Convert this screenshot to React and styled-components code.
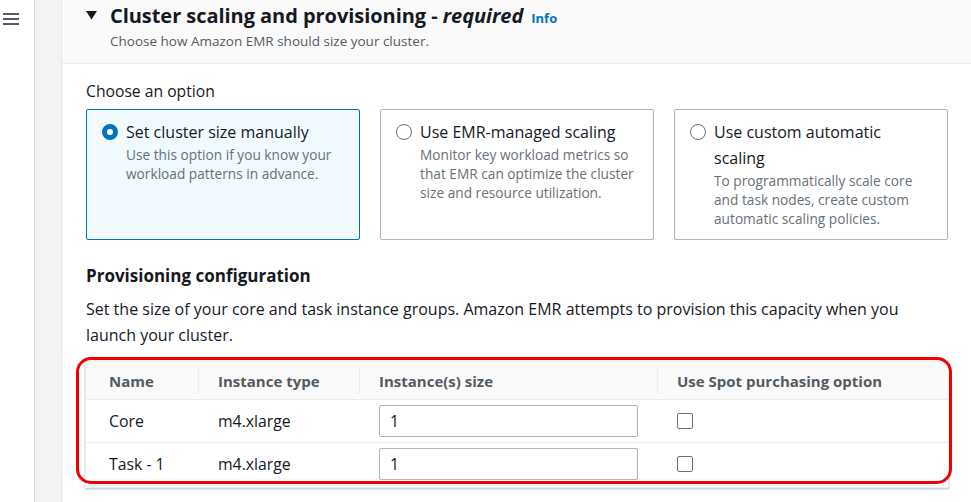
import styled, { createGlobalStyle } from 'styled-components'

const GlobalStyle = createGlobalStyle`
	html, body {
		margin: 0;
		padding: 0;
		background: #ffffff;
		font-family: 'Open Sans', 'Noto Sans', sans-serif;
		color: #16191f;
		overflow: hidden;
	}
`

const Page = styled.div`
	display: flex;
	width: 971px;
	height: 502px;
	overflow: hidden;
`

const NavRail = styled.div`
	width: 34px;
	flex-shrink: 0;
	padding-top: 12px;
	display: flex;
	justify-content: flex-start;
	padding-left: 3px;
	box-sizing: border-box;
`

const Gutter = styled.div`
	width: 28px;
	flex-shrink: 0;
	background: #f2f3f3;
	border-left: 1px solid #d5dbdb;
	border-right: 1px solid #e4e8e8;
	box-sizing: border-box;
`

const Panel = styled.section`
	flex: 1;
	min-width: 0;
	background: #ffffff;
`

const PanelHeader = styled.header`
	height: 64px;
	box-sizing: border-box;
	background: #fafafa;
	border-bottom: 1px solid #eaeded;
	padding: 3px 24px 0 24px;
	display: flex;
	gap: 13px;
`

const Caret = styled.span`
	display: flex;
	align-items: flex-start;
	width: 11px;
	padding-top: 8px;
`

const HeaderText = styled.div`
	display: flex;
	flex-direction: column;
`

const Title = styled.h2`
	margin: 0;
	font-size: 20px;
	line-height: 26px;
	font-weight: 700;
	letter-spacing: -0.05px;
	color: #16191f;

	em {
		font-style: italic;
	}
`

const InfoLink = styled.a`
	font-size: 13px;
	font-weight: 700;
	color: #0073bb;
	margin-left: 8px;
	letter-spacing: 0;
	text-decoration: none;
`

const Subtitle = styled.p`
	margin: 0;
	font-size: 13.5px;
	line-height: 20px;
	color: #545b64;
`

const Body = styled.div`
	padding: 16px 24px 0 24px;
	display: flex;
	flex-direction: column;
`

const FieldLabel = styled.div`
	font-size: 15.7px;
	line-height: 22px;
	color: #16191f;
	margin-bottom: 7px;
`

const Cards = styled.div`
	display: grid;
	grid-template-columns: repeat(3, 1fr);
	gap: 20px;
	width: 862px;
`

const Card = styled.label`
	box-sizing: border-box;
	height: 131px;
	padding: 9px 15px;
	display: flex;
	gap: 8px;
	border: 1px solid ${(p) => (p.$selected ? '#0073bb' : '#aab7b8')};
	background: ${(p) => (p.$selected ? '#f1faff' : '#ffffff')};
	border-radius: 2px;
`

const Radio = styled.span`
	flex-shrink: 0;
	width: 16px;
	height: 16px;
	margin-top: 5px;
	border-radius: 50%;
	box-sizing: border-box;
	border: ${(p) => (p.$checked ? '5px solid #0073bb' : '1.5px solid #687078')};
	background: #ffffff;
`

const CardText = styled.div`
	display: flex;
	flex-direction: column;
`

const CardTitle = styled.span`
	font-size: 16px;
	line-height: 26px;
	color: #16191f;
`

const CardDesc = styled.span`
	font-size: 13.7px;
	line-height: 19px;
	color: #687078;
`

const SectionTitle = styled.h3`
	margin: 24px 0 0 0;
	font-size: 17px;
	line-height: 24px;
	font-weight: 700;
	color: #16191f;
`

const Paragraph = styled.p`
	margin: 8px 0 0 0;
	font-size: 16px;
	line-height: 26px;
	color: #16191f;
`

const TableWrap = styled.div`
	position: relative;
	margin: 13px 0 0 -1px;
	width: 864px;
`

const Table = styled.div`
	height: 125px;
	overflow: hidden;
	border: 1px solid #eaeded;
	box-shadow: 0 1px 2px rgba(0, 28, 36, 0.3);
	background: #ffffff;
`

const Row = styled.div`
	display: grid;
	grid-template-columns: 112px 161px 298px 1fr;
	align-items: center;
	height: ${(p) => (p.$head ? '38px' : '43px')};
	background: ${(p) => (p.$head ? '#fafafa' : '#ffffff')};
	border-bottom: 1px solid #eaeded;
	box-sizing: border-box;
`

const HeadCell = styled.div`
	position: relative;
	padding-left: ${(p) => (p.$first ? '23px' : '20px')};
	font-size: 15px;
	font-weight: 700;
	color: #545b64;

	&::before {
		content: '';
		display: ${(p) => (p.$first ? 'none' : 'block')};
		position: absolute;
		left: 0;
		top: -3px;
		bottom: -3px;
		width: 1px;
		background: #eaeded;
	}
`

const Cell = styled.div`
	padding-left: ${(p) => (p.$first ? '23px' : '20px')};
	font-size: 15.8px;
	color: #16191f;
`

const SizeInput = styled.input`
	width: 259px;
	height: 32px;
	box-sizing: border-box;
	border: 1px solid #aab7b8;
	border-radius: 2px;
	padding: 0 10px;
	font-family: 'Open Sans', 'Noto Sans', sans-serif;
	font-size: 15.8px;
	color: #16191f;
	outline: none;
`

const CheckBox = styled.span`
	display: block;
	width: 16px;
	height: 16px;
	box-sizing: border-box;
	border: 1px solid #687078;
	border-radius: 2px;
	background: #ffffff;
`

const Highlight = styled.div`
	position: absolute;
	left: -9px;
	right: -3px;
	top: -4px;
	bottom: 4px;
	border: 3.5px solid #f00000;
	border-radius: 15px;
	pointer-events: none;
`

const options = [
	{
		title: 'Set cluster size manually',
		desc: 'Use this option if you know your workload patterns in advance.',
		selected: true,
	},
	{
		title: 'Use EMR-managed scaling',
		desc: 'Monitor key workload metrics so that EMR can optimize the cluster size and resource utilization.',
	},
	{
		title: 'Use custom automatic scaling',
		desc: 'To programmatically scale core and task nodes, create custom automatic scaling policies.',
	},
]

const rows = [
	{ name: 'Core', type: 'm4.xlarge', size: '1' },
	{ name: 'Task - 1', type: 'm4.xlarge', size: '1' },
]

const MenuIcon = () => (
	<svg width='16' height='14' viewBox='0 0 16 14'>
		<path d='M0 2h16M0 7h16M0 12h16' stroke='#545b64' strokeWidth='2' />
	</svg>
)

const CaretIcon = () => (
	<svg width='11' height='9' viewBox='0 0 11 9'>
		<path d='M0 0h11L5.5 8.5z' fill='#16191f' />
	</svg>
)

export default function App() {
	return (
		<>
			<GlobalStyle />
			<Page>
				<NavRail>
					<MenuIcon />
				</NavRail>
				<Gutter />
				<Panel>
					<PanelHeader>
						<Caret>
							<CaretIcon />
						</Caret>
						<HeaderText>
							<Title>
								Cluster scaling and provisioning - <em>required</em>
								<InfoLink>Info</InfoLink>
							</Title>
							<Subtitle>Choose how Amazon EMR should size your cluster.</Subtitle>
						</HeaderText>
					</PanelHeader>
					<Body>
						<FieldLabel>Choose an option</FieldLabel>
						<Cards>
							{options.map((o) => (
								<Card key={o.title} $selected={o.selected}>
									<Radio $checked={o.selected} />
									<CardText>
										<CardTitle>{o.title}</CardTitle>
										<CardDesc>{o.desc}</CardDesc>
									</CardText>
								</Card>
							))}
						</Cards>
						<SectionTitle>Provisioning configuration</SectionTitle>
						<Paragraph>
							Set the size of your core and task instance groups. Amazon EMR
							attempts to provision this capacity when you launch your cluster.
						</Paragraph>
						<TableWrap>
							<Table>
								<Row $head>
									<HeadCell $first>Name</HeadCell>
									<HeadCell>Instance type</HeadCell>
									<HeadCell>Instance(s) size</HeadCell>
									<HeadCell>Use Spot purchasing option</HeadCell>
								</Row>
								{rows.map((r) => (
									<Row key={r.name}>
										<Cell $first>{r.name}</Cell>
										<Cell>{r.type}</Cell>
										<Cell>
											<SizeInput defaultValue={r.size} />
										</Cell>
										<Cell>
											<CheckBox />
										</Cell>
									</Row>
								))}
							</Table>
							<Highlight />
						</TableWrap>
					</Body>
				</Panel>
			</Page>
		</>
	)
}
